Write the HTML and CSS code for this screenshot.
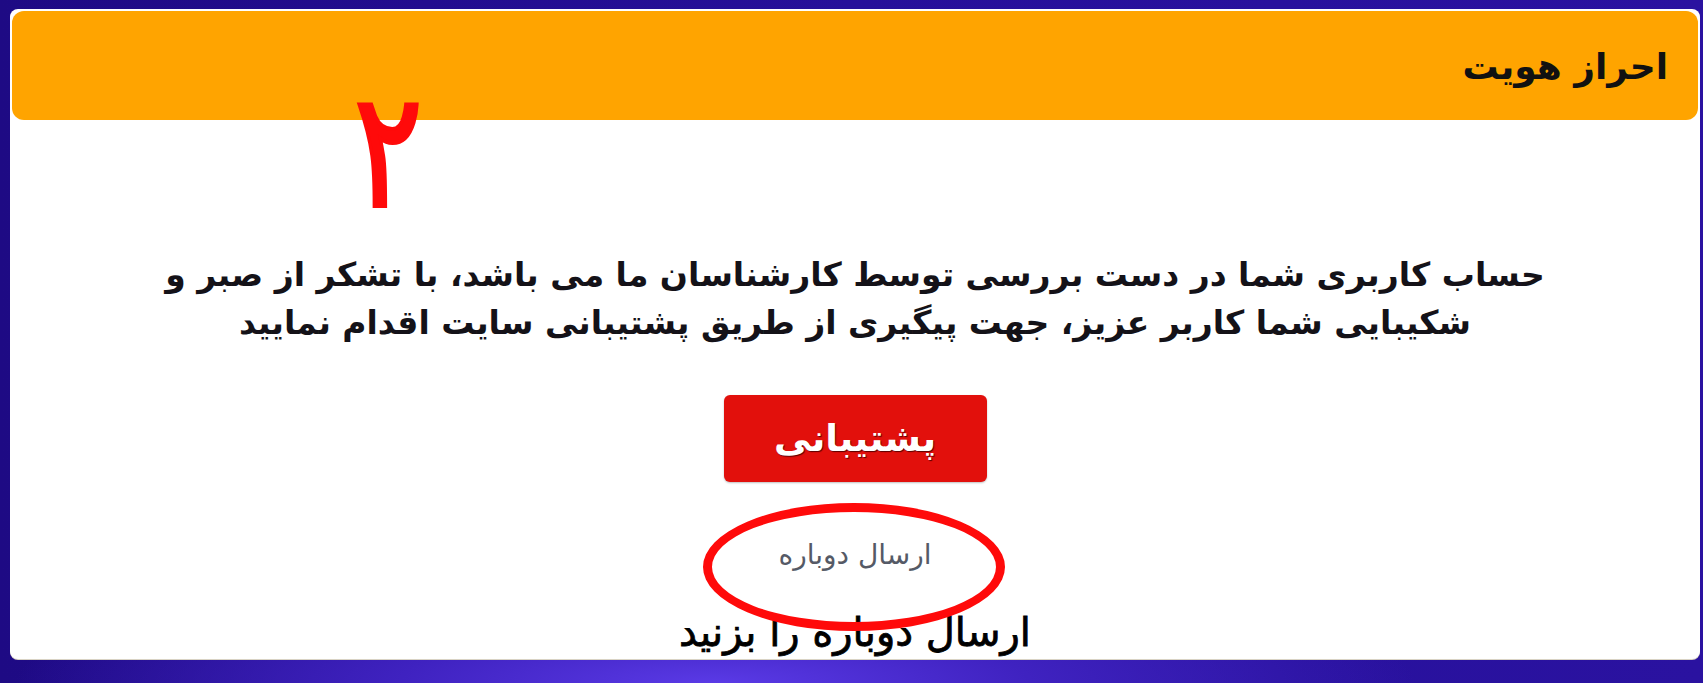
FILE: index.html
```html
<!DOCTYPE html>
<html lang="fa" dir="rtl">
<head>
<meta charset="utf-8">
<title>احراز هویت</title>
<link rel="stylesheet" href="styles.css">
</head>
<body>
<div class="card">
  <div class="card-header">
    <h2 class="card-title">احراز هویت</h2>
  </div>
  <div class="step-mark">۲</div>
  <div class="card-body">
    <p class="message">حساب کاربری شما در دست بررسی توسط کارشناسان ما می باشد، با تشکر از صبر و<br>شکیبایی شما کاربر عزیز، جهت پیگیری از طریق پشتیبانی سایت اقدام نمایید</p>
    <a class="btn-support" href="#">پشتیبانی</a>
    <div class="resend-wrap">
      <a class="resend" href="#">ارسال دوباره</a>
      <span class="ring"></span>
    </div>
    <div class="hint">ارسال دوباره را بزنید</div>
  </div>
</div>
</body>
</html>
```
FILE: styles.css
```css
html, body {
  margin: 0;
  height: 100%;
}
body {
  font-family: "DejaVu Sans", sans-serif;
  background:
    radial-gradient(ellipse 700px 120px at 42% 100%, #5a3ae6 0%, #3f22c0 45%, rgba(40,14,150,0) 100%),
    linear-gradient(90deg, #1e0a84 0%, #26109a 50%, #2a12a0 100%);
  padding: 9px 3px 0 10px;
  box-sizing: border-box;
  overflow: hidden;
}
.card {
  position: relative;
  background: #fff;
  border-radius: 8px;
  height: 650px;
  padding: 2px;
  box-sizing: border-box;
  box-shadow: 0 1px 0 #d9d3c4;
}
.card-header {
  background: #ffa400;
  border-radius: 12px;
  height: 109px;
  display: flex;
  align-items: center;
  padding-right: 30px;
}
.card-title {
  margin: 0;
  font-size: 36px;
  font-weight: bold;
  color: #111;
  padding-top: 2px;
}
.step-mark {
  position: absolute;
  left: 344px;
  top: 62px;
  color: #ff0a0a;
  font-size: 160px;
  font-weight: normal;
  line-height: 1;
  -webkit-text-stroke: 4px #ff0a0a;
  transform: scaleX(0.8);
  transform-origin: left top;
}
.card-body {
  display: flex;
  flex-direction: column;
  align-items: center;
}
.message {
  margin: 131px 0 0;
  text-align: center;
  font-size: 33px;
  font-weight: bold;
  line-height: 48px;
  color: #141218;
}
.btn-support {
  margin-top: 48px;
  width: 263px;
  height: 87px;
  background: #e2100c;
  border-radius: 6px;
  color: #fff;
  text-decoration: none;
  font-size: 37px;
  font-weight: bold;
  display: flex;
  align-items: center;
  justify-content: center;
  text-shadow: 1px 1px 1px #5a0000;
  box-shadow: 0 1px 2px rgba(0,0,0,0.25);
}
.resend-wrap {
  position: relative;
  margin-top: 58px;
  height: 30px;
  display: flex;
  align-items: center;
}
.resend {
  font-size: 28px;
  color: #555a66;
  text-decoration: none;
  line-height: 30px;
}
.ring {
  position: absolute;
  left: 50%;
  top: 50%;
  width: 284px;
  height: 110px;
  margin-left: -152px;
  margin-top: -52px;
  border: 9px solid #ff0a0a;
  border-radius: 50%;
}
.hint {
  margin-top: 39px;
  font-size: 40px;
  line-height: 46px;
  color: #000;
  -webkit-text-stroke: 0.8px #000;
}
```
